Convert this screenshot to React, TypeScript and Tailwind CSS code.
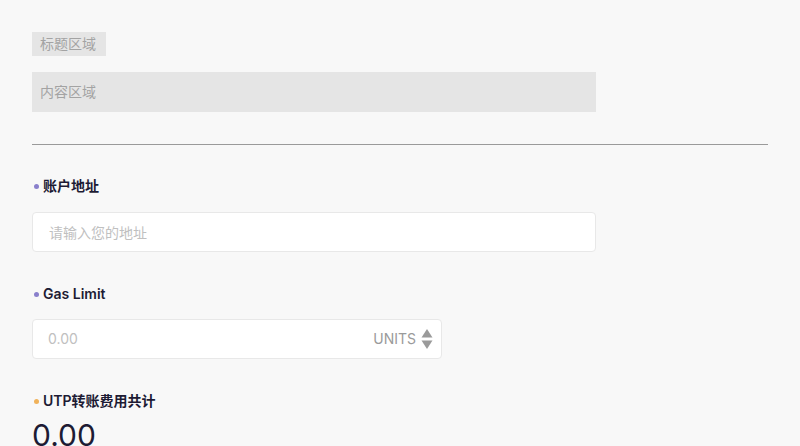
import React from "react";

const font = "font-['Inter','Noto_Sans_CJK_SC',sans-serif]";

function Label({ text, dot }: { text: string; dot: string }) {
  return (
    <div className="flex items-center h-5">
      <span className={`w-[5px] h-[5px] rounded-full ml-[2px] mr-[4px] ${dot}`} />
      <span className="text-sm font-semibold text-[#1d1b34]">{text}</span>
    </div>
  );
}

export default function App() {
  return (
    <div className={`w-[800px] h-[446px] overflow-hidden bg-[#f8f8f8] px-8 pt-8 ${font}`}>
      <div className="w-fit bg-[#e5e5e5] pl-2 pr-[10px] h-6 leading-6 text-sm text-[#a3a3a3]">
        标题区域
      </div>
      <div className="mt-4 w-[564px] h-10 bg-[#e5e5e5] px-2 leading-10 text-sm text-[#a3a3a3]">
        内容区域
      </div>
      <div className="mt-8 border-t border-[#9a9a9a]" />

      <div className="mt-[31px]">
        <Label text="账户地址" dot="bg-[#8a80cc]" />
      </div>
      <input
        className="mt-4 block w-[564px] h-10 bg-white border border-[#e8e8e8] rounded px-4 text-sm outline-none placeholder:text-[#c0c0c0]"
        placeholder="请输入您的地址"
      />

      <div className="mt-8">
        <Label text="Gas Limit" dot="bg-[#8a80cc]" />
      </div>
      <div className="mt-[15px] w-[410px] h-10 bg-white border border-[#e8e8e8] rounded flex items-center pl-[15px] pr-2">
        <input
          className="flex-1 min-w-0 text-sm outline-none bg-transparent placeholder:text-[#c0c0c0]"
          placeholder="0.00"
        />
        <span className="text-sm text-[#9a9a9a] mr-[5px]">UNITS</span>
        <svg width="12" height="22" viewBox="0 0 12 22">
          <path d="M6 1 L11.5 9.5 H0.5 Z" fill="#9a9a9a" />
          <path d="M6 21 L11.5 12.5 H0.5 Z" fill="#9a9a9a" />
        </svg>
      </div>

      <div className="mt-8">
        <Label text="UTP转账费用共计" dot="bg-[#f0b25a]" />
      </div>
      <div className="mt-[6px] text-[30px] leading-9 text-[#1d1b34]">0.00</div>
    </div>
  );
}
